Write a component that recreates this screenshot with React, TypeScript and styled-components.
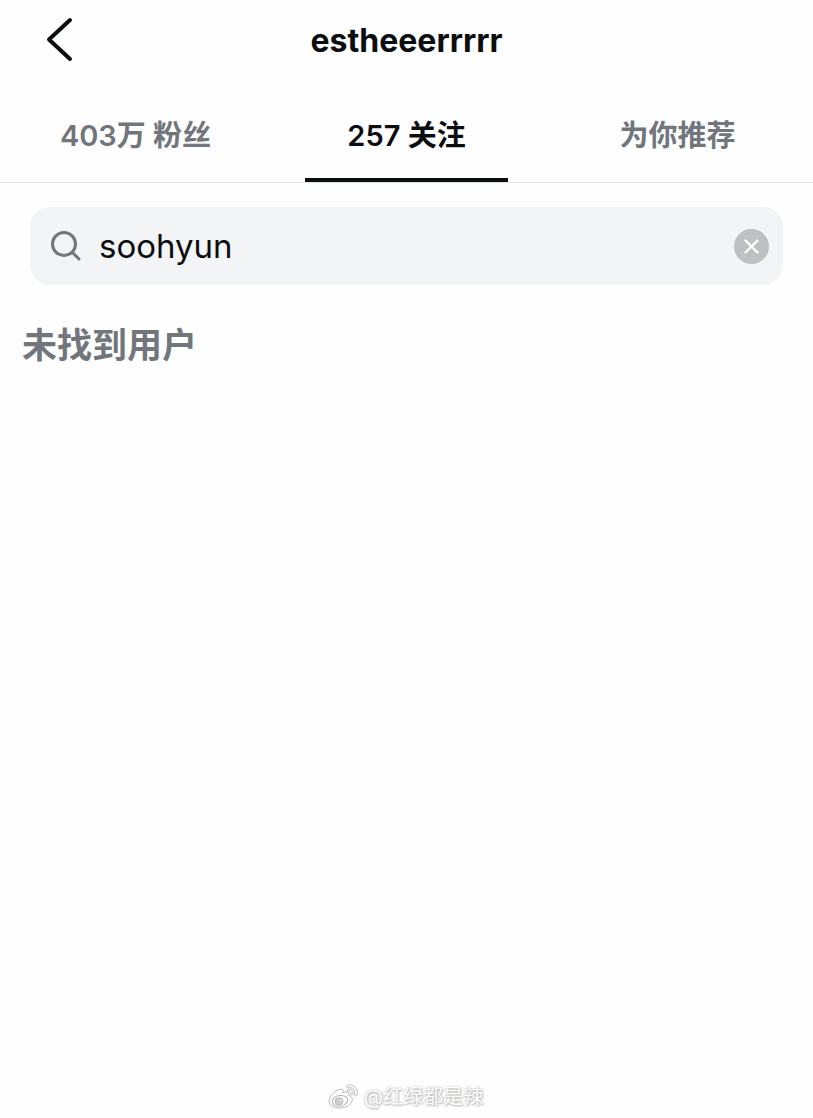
import { useState } from "react";
import styled, { createGlobalStyle } from "styled-components";

const GlobalStyle = createGlobalStyle`
  * { box-sizing: border-box; }
  body {
    margin: 0;
    background: #fefefe;
    color: #0b0e10;
    font-family: Inter, "Noto Sans CJK SC", sans-serif;
  }
  button, input { font: inherit; color: inherit; }
`;

const Page = styled.div`
  display: flex;
  flex-direction: column;
  min-height: 100vh;
`;

const Header = styled.header`
  display: grid;
  grid-template-columns: 96px 1fr 96px;
  align-items: center;
  height: 88px;
  padding-bottom: 6px;
`;

const IconButton = styled.button`
  display: flex;
  align-items: center;
  justify-content: center;
  padding: 0;
  border: 0;
  background: none;
  cursor: pointer;
`;

const BackButton = styled(IconButton)`
  justify-self: end;
  width: 74px;
  height: 56px;
  margin-bottom: 4px;
`;

const Title = styled.h1`
  margin: 0;
  text-align: center;
  font-size: 32px;
  line-height: 40px;
  font-weight: 700;
`;

const Tabs = styled.nav`
  display: grid;
  grid-template-columns: repeat(3, 1fr);
  border-bottom: 1px solid #e3e4e6;
`;

const Tab = styled.button<{ $active: boolean }>`
  display: flex;
  flex-direction: column;
  align-items: center;
  height: 94px;
  padding: 28px 0 0;
  border: 0;
  background: none;
  color: ${({ $active }) => ($active ? "#0b0e10" : "#70767c")};
  font-size: 29px;
  line-height: 40px;
  font-weight: 600;
  white-space: nowrap;
  cursor: pointer;

  &::after {
    content: "";
    width: 75%;
    height: 4px;
    margin-top: auto;
    background: ${({ $active }) => ($active ? "#0b0e10" : "transparent")};
  }
`;

const Search = styled.label`
  display: flex;
  align-items: center;
  gap: 17px;
  height: 78px;
  margin: 24px 30px 0;
  padding: 0 14px 0 20px;
  border-radius: 20px;
  background: #f2f4f6;
`;

const SearchInput = styled.input`
  flex: 1;
  min-width: 0;
  padding: 0;
  border: 0;
  outline: 0;
  background: none;
  font-size: 33px;
  line-height: 44px;
`;

const ClearButton = styled(IconButton)`
  width: 35px;
  height: 35px;
  border-radius: 50%;
  background: #bfc0c2;
`;

const Empty = styled.p`
  margin: 36px 22px 0;
  color: #70767c;
  font-size: 35px;
  line-height: 48px;
  font-weight: 600;
`;

const Watermark = styled.footer`
  display: flex;
  align-items: center;
  justify-content: center;
  gap: 4px;
  margin-top: auto;
  padding: 0 2px 6px 0;
  color: #fff;
  font-size: 20px;
  line-height: 30px;
  text-shadow: 0 0 2px #aaa, 1px 1px 2px #bbb;
`;

const tabs = ["403万 粉丝", "257 关注", "为你推荐"];

function BackIcon() {
  return (
    <svg width="30" height="46" viewBox="0 0 30 46" fill="none" stroke="#0b0e10" strokeWidth="4" strokeLinecap="round" strokeLinejoin="round" aria-hidden="true">
      <path d="M26 4 5 23.500 26 43" />
    </svg>
  );
}

function SearchIcon() {
  return (
    <svg width="32" height="32" viewBox="0 0 32 32" fill="none" stroke="#70767c" strokeWidth="3" strokeLinecap="round" aria-hidden="true">
      <circle cx="14" cy="14" r="11.500" />
      <path d="m22.500 22.500 6.500 6.500" />
    </svg>
  );
}

function ClearIcon() {
  return (
    <svg width="17" height="17" viewBox="0 0 17 17" fill="none" stroke="#fff" strokeWidth="2.400" strokeLinecap="round" aria-hidden="true">
      <path d="m2.500 2.500 12 12m0-12-12 12" />
    </svg>
  );
}

function WeiboIcon() {
  return (
    <svg width="32" height="28" viewBox="0 0 32 28" fill="#fff" stroke="#b8b8b8" strokeWidth="1" strokeLinejoin="round" aria-hidden="true">
      <path d="M11.500 6.500c2.800-1 4.200.5 3.400 3.300 3.600-1.500 6.800-.9 5.700 2.600 3 .9 4.300 2.600 3.500 5.200-1.300 4.200-6.400 7.400-12.400 7.400C5.600 25 1 22 1 17.700c0-4 5.200-9.700 10.500-11.200Z" />
      <ellipse cx="12" cy="17.800" rx="7.800" ry="5.300" transform="rotate(-8 12 17.800)" />
      <ellipse cx="11" cy="18.300" rx="4" ry="3.500" fill="#d4d4d4" />
      <circle cx="9.800" cy="19.200" r="1.300" />
      <circle cx="12.300" cy="17.400" r=".6" stroke="none" />
      <path d="M19.500 2.300c6-1.600 11.200 3.500 9.500 9.500-.5 1.500-2.900.9-2.500-.7 1-3.900-2.300-7.200-6.200-6.300-1.600.4-2.300-2-.8-2.500Z" />
      <path d="M20.200 6.500c3.300-.7 5.500 1.800 4.800 4.700-.4 1.300-2.400.9-2.100-.5.200-1.300-.8-2.300-2.100-2.100-1.400.2-1.900-1.800-.6-2.100Z" />
    </svg>
  );
}

export default function App() {
  const [active, setActive] = useState(1);
  const [query, setQuery] = useState("soohyun");

  return (
    <Page>
      <GlobalStyle />
      <Header>
        <BackButton type="button" aria-label="返回">
          <BackIcon />
        </BackButton>
        <Title>estheeerrrrr</Title>
      </Header>
      <Tabs>
        {tabs.map((label, index) => (
          <Tab key={label} type="button" $active={index === active} onClick={() => setActive(index)}>
            {label}
          </Tab>
        ))}
      </Tabs>
      <main>
        <Search>
          <SearchIcon />
          <SearchInput type="text" aria-label="搜索" value={query} onChange={(event) => setQuery(event.target.value)} />
          <ClearButton type="button" aria-label="清除" onClick={() => setQuery("")}>
            <ClearIcon />
          </ClearButton>
        </Search>
        <Empty>未找到用户</Empty>
      </main>
      <Watermark>
        <WeiboIcon />
        <span>@红绿都是辣</span>
      </Watermark>
    </Page>
  );
}
